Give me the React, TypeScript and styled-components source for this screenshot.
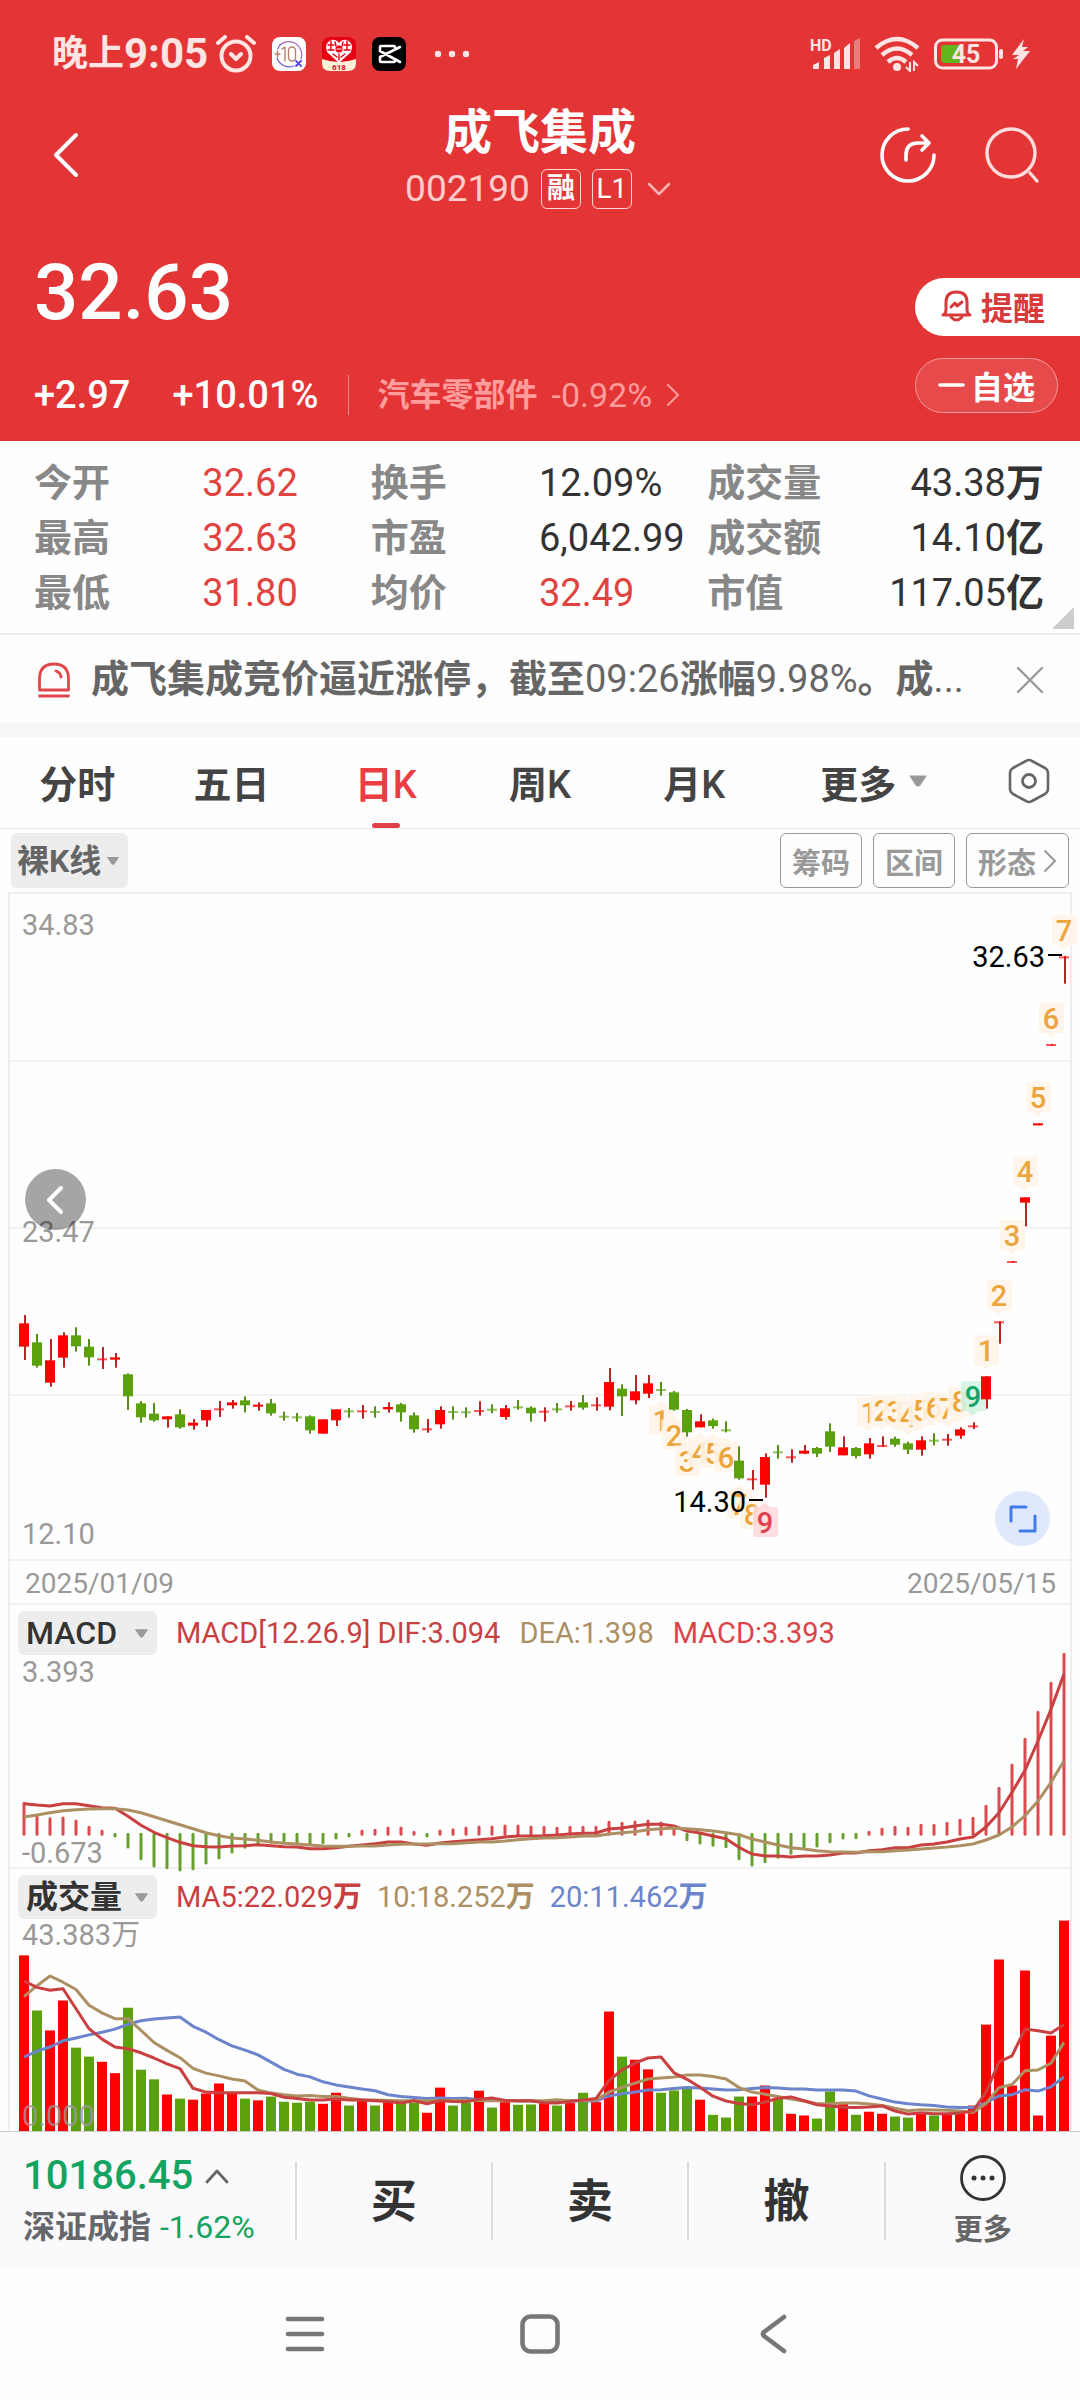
import React from 'react';
import styled, { createGlobalStyle } from 'styled-components';

const RED = '#e33536';
const UP = '#fe0000';
const DOWN = '#5ba10e';
const LINE_RED = '#c8403f';
const LINE_GOLD = '#ac9064';
const LINE_BLUE = '#6b84cb';

const GlobalStyle = createGlobalStyle`
  * { box-sizing: border-box; }
  body { margin: 0; background: #fdfdfd; }
  body, button, select {
    font-family: Roboto, "Noto Sans CJK SC", sans-serif;
    font-weight: 500;
  }
  button, select { border: 0; padding: 0; margin: 0; background: none; color: inherit; cursor: pointer; }
  h1, p, dl, dd, dt { margin: 0; font-weight: 500; }
  svg { display: block; flex: none; }
`;

const Page = styled.main`
  width: 100%;
  background: #fefefe;
  color: #333;
`;

/* ---------- header ---------- */
const Header = styled.header`
  background: ${RED};
  color: #fff;
`;
const StatusBar = styled.div`
  display: flex;
  align-items: center;
  justify-content: space-between;
  padding: 32px 50px 30px 52px;
  color: #ffe4e4;
`;
const StatusGroup = styled.div<{ $gap: number }>`
  display: flex;
  align-items: center;
  gap: ${(p) => p.$gap}px;
`;
const Clock = styled.div`
  display: flex;
  align-items: center;
  font-size: 36px;
  line-height: 44px;
  font-weight: 700;
  margin-right: -8px;
`;
const ClockDigits = styled.span`
  font-size: 42px;
`;
const NavBar = styled.div`
  display: grid;
  grid-template-columns: 1fr auto 1fr;
  align-items: center;
  padding: 0 40px;
`;
const IconButton = styled.button`
  display: flex;
  align-items: center;
  justify-content: center;
`;
const BackButton = styled(IconButton)`
  justify-self: start;
  padding: 0 0 6px 10px;
`;
const NavActions = styled.div`
  display: flex;
  justify-content: flex-end;
  gap: 47px;
  padding-bottom: 6px;
`;
const TitleBlock = styled.div`
  display: flex;
  flex-direction: column;
  align-items: center;
  gap: 9px;
`;
const Title = styled.h1`
  font-size: 48px;
  line-height: 54px;
  font-weight: 700;
`;
const CodeRow = styled.div`
  display: flex;
  align-items: center;
  gap: 11px;
  font-size: 37px;
  line-height: 40px;
  color: #ffcdcd;
  font-weight: 400;
`;
const Tag = styled.span`
  width: 40px;
  border: 1px solid #ffd5d5;
  border-radius: 6px;
  color: #fff;
  font-size: 28px;
  line-height: 38px;
  font-weight: 400;
  text-align: center;
`;
const Quote = styled.section`
  display: flex;
  justify-content: space-between;
  align-items: flex-end;
  padding: 44px 0 26px 34px;
`;
const Price = styled.p`
  font-size: 78px;
  line-height: 80px;
`;
const ChangeRow = styled.div`
  display: flex;
  align-items: center;
  margin-top: 42px;
  font-size: 38px;
  line-height: 40px;
`;
const Change = styled.span`
  margin-right: 42px;
`;
const Sector = styled.a`
  display: flex;
  align-items: center;
  gap: 14px;
  border-left: 1px solid #f08a8a;
  padding-left: 28px;
  margin-left: -12px;
  color: #ff9c9c;
  font-size: 32px;
  font-weight: 700;
  text-decoration: none;
`;
const SectorChange = styled.span`
  font-size: 34px;
  font-weight: 400;
`;
const QuoteActions = styled.div`
  display: flex;
  flex-direction: column;
  gap: 22px;
  width: 165px;
  padding-bottom: 2px;
`;
const RemindButton = styled.button`
  display: flex;
  align-items: center;
  gap: 9px;
  height: 58px;
  padding: 0 0 2px 26px;
  border-radius: 30px 0 0 30px;
  background: #fff;
  color: #d83a3b;
  font-size: 32px;
  font-weight: 700;
`;
const WatchButton = styled.button`
  display: flex;
  align-items: center;
  justify-content: center;
  gap: 6px;
  height: 55px;
  margin-right: 22px;
  padding-bottom: 2px;
  border: 1px solid #f39b9b;
  border-radius: 30px;
  background: #e64a4b;
  font-size: 32px;
  font-weight: 700;
`;

/* ---------- figures ---------- */
const Stats = styled.dl`
  position: relative;
  display: grid;
  grid-template-columns: repeat(3, 1fr);
  padding: 15px 36px 12px 34px;
  border-bottom: 2px solid #eee;
  font-size: 38px;
  line-height: 55px;
`;
const Stat = styled.div<{ $end?: boolean }>`
  display: grid;
  grid-template-columns: ${(p) => (p.$end ? 'auto 1fr' : '1fr 1fr')};
  text-align: ${(p) => (p.$end ? 'right' : 'left')};
  white-space: nowrap;
`;
const StatName = styled.dt`
  color: #888;
  font-weight: 700;
`;
const StatValue = styled.dd<{ $up?: boolean }>`
  color: ${(p) => (p.$up ? '#e04340' : '#333')};
  font-weight: 400;
`;
const Han = styled.span`
  font-weight: 700;
`;
const Corner = styled.span`
  position: absolute;
  right: 6px;
  bottom: 4px;
  border-left: 22px solid transparent;
  border-bottom: 22px solid #ccc;
`;
const Notice = styled.section`
  display: flex;
  align-items: center;
  padding: 17px 36px 16px 37px;
  color: #666;
  border-bottom: 14px solid #f7f7f7;
`;
const NoticeText = styled.p`
  flex: 1;
  min-width: 0;
  margin: 0 48px 0 20px;
  font-size: 38px;
  line-height: 55px;
  font-weight: 400;
  white-space: nowrap;
  overflow: hidden;
  text-overflow: ellipsis;
`;

/* ---------- tabs ---------- */
const Tabs = styled.nav`
  display: grid;
  grid-template-columns: repeat(5, 3fr) 4fr 2fr;
  border-bottom: 1px solid #e8e8e8;
`;
const Tab = styled.button<{ $active?: boolean }>`
  position: relative;
  display: flex;
  align-items: center;
  justify-content: center;
  height: 91px;
  padding-bottom: 3px;
  font-size: 38px;
  color: ${(p) => (p.$active ? '#ec3d45' : '#444')};
  &::after {
    content: '';
    display: ${(p) => (p.$active ? 'block' : 'none')};
    position: absolute;
    bottom: 0;
    width: 28px;
    height: 5px;
    border-radius: 3px;
    background: #e03f46;
  }
`;
const ToolRow = styled.div`
  display: flex;
  align-items: center;
  gap: 11px;
  padding: 4px 11px;
`;
const Picker = styled.label<{ $tall?: boolean }>`
  display: flex;
  align-items: center;
  justify-content: space-between;
  width: ${(p) => (p.$tall ? 117 : 139)}px;
  height: ${(p) => (p.$tall ? 55 : 44)}px;
  padding: 0 8px 0 ${(p) => (p.$tall ? 6 : 8)}px;
  border-radius: 6px;
  background: #ededed;
  color: ${(p) => (p.$tall ? '#666' : '#333')};
`;
const PickerSelect = styled.select<{ $bold?: boolean }>`
  appearance: none;
  font-size: 32px;
  line-height: 40px;
  font-weight: ${(p) => (p.$bold ? 700 : 500)};
  outline: 0;
`;
const ToolSpacer = styled.span`
  flex: 1;
`;
const ToolButton = styled.button`
  display: flex;
  align-items: center;
  gap: 7px;
  height: 55px;
  padding: 0 11px;
  border: 1px solid #999;
  border-radius: 6px;
  color: #999;
  font-size: 29px;
  font-weight: 700;
`;

/* ---------- charts ---------- */
const Frame = styled.section`
  margin: 0 8px;
  border: 2px solid #eee;
  border-width: 2px 2px 0;
`;
const Panel = styled.div`
  position: relative;
  border-bottom: 2px solid #f0f0f0;
`;
const LastPanel = styled.div``;
const Plot = styled.svg`
  width: 100%;
  height: auto;
  overflow: visible;
`;
const PrevButton = styled.button`
  position: absolute;
  left: 15px;
  top: 275px;
  display: flex;
  align-items: center;
  justify-content: center;
  width: 61px;
  height: 61px;
  padding-right: 4px;
  border-radius: 50%;
  background: rgba(0, 0, 0, 0.35);
`;
const ExpandButton = styled.button`
  position: absolute;
  right: 20px;
  bottom: 13px;
  display: flex;
  align-items: center;
  justify-content: center;
  width: 55px;
  height: 55px;
  border-radius: 50%;
  background: #dfe8fc;
`;
const Dates = styled.div`
  display: flex;
  justify-content: space-between;
  padding: 4px 14px 0 15px;
  border-bottom: 2px solid #f2f2f2;
  color: #999;
  font-size: 28px;
  line-height: 38px;
  font-weight: 400;
`;
const Legend = styled.div<{ $gap: number }>`
  display: flex;
  align-items: center;
  gap: ${(p) => p.$gap}px;
  padding: 6px 8px 0;
  font-size: 29px;
  line-height: 44px;
  white-space: nowrap;
`;
const LegendItem = styled.span<{ $color: string }>`
  color: ${(p) => p.$color};
  font-weight: 400;
`;
const LegendPicker = styled(Picker)`
  margin-right: 4px;
`;

/* ---------- bottom ---------- */
const TradeBar = styled.footer`
  display: grid;
  grid-template-columns: 3fr repeat(4, 2fr);
  align-items: center;
  padding: 24px 0;
  border-top: 1px solid #ccc;
  background: #fafafc;
`;
const IndexBlock = styled.button`
  display: flex;
  flex-direction: column;
  gap: 12px;
  padding-left: 23px;
  text-align: left;
`;
const IndexValue = styled.span`
  display: flex;
  align-items: center;
  gap: 12px;
  color: #12a460;
  font-size: 40px;
  line-height: 40px;
`;
const IndexName = styled.span`
  display: flex;
  align-items: center;
  gap: 9px;
  color: #66676c;
  font-size: 32px;
  line-height: 38px;
  font-weight: 700;
`;
const IndexChange = styled.span`
  color: #12a460;
  font-weight: 400;
`;
const TradeButton = styled.button<{ $small?: boolean }>`
  display: flex;
  flex-direction: column;
  align-items: center;
  justify-content: center;
  gap: 12px;
  height: 78px;
  border-left: 2px solid #dcdcdf;
  color: ${(p) => (p.$small ? '#666' : '#333')};
  font-size: ${(p) => (p.$small ? 29 : 46)}px;
  line-height: ${(p) => (p.$small ? 34 : 50)}px;
  font-weight: 700;
`;
const SystemNav = styled.nav`
  display: flex;
  justify-content: center;
  gap: 195px;
  padding: 44px 0 46px;
  background: #fdfdfd;
`;

/* ---------- data ---------- */
// One row per trading day: direction, high, body top, body bottom, low.
// Levels are in thirds of a pixel.
const CANDLES: [number, number, number, number, number][] = [
  [1,405,430,500,540],[0,462,487,557,563],[1,477,541,608,620],[1,457,466,533,563],[0,442,466,499,515],
  [0,477,500,532,557],[1,501,535,539,567],[1,519,532,539,563],[0,580,583,649,690],[0,663,670,712,728],
  [0,669,701,721,725],[1,709,709,718,743],[0,688,703,742,746],[1,717,728,737,749],[1,690,690,721,740],
  [1,663,685,689,711],[1,660,667,676,686],[0,649,661,676,697],[1,667,674,680,692],[0,657,670,700,707],
  [0,695,707,710,722],[0,699,709,712,725],[0,706,709,751,761],[1,718,718,761,761],[1,688,688,721,738],
  [0,684,691,695,713],[1,675,691,696,716],[0,679,693,697,713],[1,667,681,688,698],[0,669,673,697,725],
  [0,697,706,748,758],[1,717,745,749,758],[1,679,690,733,746],[0,679,693,697,719],[0,682,694,697,713],
  [1,664,690,694,707],[0,673,686,691,700],[1,675,685,711,719],[0,660,679,682,689],[0,679,683,700,725],
  [1,682,692,697,725],[0,669,685,689,698],[1,663,676,680,692],[0,645,667,683,689],[1,652,673,677,692],
  [1,564,606,680,691],[0,613,626,649,708],[1,585,634,661,673],[1,585,610,641,654],[0,606,627,632,647],
  [0,633,637,689,692],[0,687,690,757,770],[1,703,724,742,742],[0,716,721,738,746],[0,724,748,751,757],
  [0,799,842,895,899],[1,870,895,899,929],[1,820,831,914,953],[0,795,814,818,836],[1,808,829,833,848],
  [1,795,812,821,822],[0,801,804,821,831],[0,730,754,800,816],[1,769,802,826,826],[0,801,804,828,835],
  [1,774,790,823,836],[1,769,795,800,800],[0,770,776,794,800],[0,785,790,809,822],[1,769,781,809,827],
  [0,760,779,783,796],[1,762,776,781,797],[1,742,748,767,776],[1,727,736,740,747],[1,589,589,658,686],
  [1,424,424,428,491],[1,243,243,248,248],[1,52,52,68,139],[1,-170,-170,-164,-164],[1,-408,-408,-403,-403],
  [1,-672,-671,-666,-589],
];
const VOLUME = [
  277,437,495,408,545,571,586,619,429,609,637,681,693,696,678,649,678,693,698,687,702,705,702,708,676,713,700,
  713,703,707,705,734,661,713,705,670,719,703,711,710,703,713,706,676,703,440,571,580,608,676,669,664,696,740,
  748,687,687,655,693,737,742,751,672,709,740,731,737,745,748,737,742,737,737,713,478,289,655,321,742,510,176,
];
const MA5 = [
  352,370,378,374,432,490,520,543,548,560,575,592,606,663,674,676,676,676,676,678,689,693,697,697,694,697,697,
  699,701,706,699,708,699,701,702,695,691,698,699,699,705,706,701,697,693,641,610,590,575,572,618,637,660,686,
  700,707,711,703,692,688,699,711,714,718,719,717,714,729,738,735,737,737,735,729,675,586,569,491,496,502,478,
];
const MA10 = [
  397,365,337,355,376,422,444,461,461,495,530,553,574,605,619,627,636,642,668,677,682,685,684,687,687,692,696,
  697,698,699,699,699,698,698,698,698,699,699,699,699,699,696,699,698,697,674,660,648,636,633,630,624,624,629,
  636,661,674,680,687,694,700,708,708,706,706,709,713,721,728,725,726,727,729,733,707,661,652,612,610,590,530,
];
const MA20 = [
  572,555,543,525,517,508,500,491,477,467,462,459,456,483,500,522,540,552,566,587,608,622,630,644,653,659,665,
  670,682,687,690,693,691,693,692,696,696,698,700,700,703,702,699,699,700,685,679,674,668,667,664,661,662,665,
  668,667,664,661,662,665,665,668,668,668,671,685,694,703,708,711,713,717,719,719,705,685,682,667,671,659,630,
];
const MACD = [
  640,678,686,684,693,712,723,738,771,806,828,833,840,836,819,803,786,772,763,757,757,760,760,758,744,738,723,
  721,714,714,727,738,723,719,714,711,711,708,708,711,712,715,712,712,712,697,700,696,693,699,718,749,759,766,
  770,806,825,815,802,790,772,768,755,744,743,727,717,712,715,706,706,700,691,685,649,595,525,448,367,280,193,
];
const DIF = [
  641,645,648,641,641,647,653,655,679,706,727,743,757,767,770,771,768,767,764,767,770,771,776,776,773,769,765,
  761,756,756,762,766,759,755,752,749,746,741,738,738,737,735,732,730,729,717,714,708,703,703,708,723,729,738,
  746,772,792,798,798,801,798,798,795,789,789,782,779,773,773,765,762,756,747,741,711,668,607,541,453,358,252,
];
const DEA = [
  681,675,668,662,659,657,656,656,660,668,680,692,704,716,728,737,744,747,751,756,760,762,765,768,769,769,768,
  768,765,763,762,762,761,761,758,756,756,753,749,746,744,743,741,738,738,732,728,725,719,716,714,716,719,723,
  728,734,747,756,765,773,777,782,785,786,787,785,785,782,780,777,774,771,767,762,750,735,711,677,633,577,512,
];
// Sequence counters: start day, labels, side of the candle.
const COUNTS: { start: number; labels: string[]; below?: boolean }[] = [
  { start: 49, labels: ['1', '2', '3', '4', '5', '6'], below: true },
  { start: 55, labels: ['7', '8', '9'], below: true },
  { start: 65, labels: ['1', '2', '3', '4', '5', '6', '7', '8', '9'] },
  { start: 74, labels: ['1', '2', '3', '4', '5', '6', '7'] },
];

const dayX = (i: number) => 24 + i * 13;
const macdY = (v: number) => -65 + v / 3;
const volumeY = (v: number) => 212 - (787 - v) / 2.904;
const points = (values: number[], toY: (v: number) => number) =>
  values.map((v, i) => `${dayX(i)},${toY(v).toFixed(1)}`).join(' ');

const AXIS = { fontSize: 29, fill: '#999', fontWeight: 400 };

// Figures stay regular while Chinese characters are set bold.
function Mixed({ text }: { text: string }) {
  return (
    <span>
      {text.split(/([\u4e00-\u9fff，。]+)/).filter(Boolean).map((part, i) => (
        /[\u4e00-\u9fff，。]/.test(part) ? <Han key={i}>{part}</Han> : part
      ))}
    </span>
  );
}

function CountBadge({ day, label, below }: { day: number; label: string; below?: boolean }) {
  const x = dayX(day);
  const [, high, , , low] = CANDLES[day];
  const y = 286 + (below ? (low + 28) / 3 : (high - 123) / 3);
  const nine = label === '9';
  const bg = nine ? (below ? '#ffd6da' : '#cdf1df') : '#fff3e6';
  const fg = nine ? (below ? '#e04350' : '#14a566') : '#eca53c';
  const tip = below ? `M${x - 5} ${y}L${x} ${y - 4}L${x + 5} ${y}Z` : `M${x - 5} ${y + 30}L${x} ${y + 34}L${x + 5} ${y + 30}Z`;
  return (
    <g>
      <rect x={x - 13} y={y - 1} width={27} height={32} rx={2} fill="#fff" opacity={0.5} />
      <rect x={x - 12} y={y} width={25} height={30} rx={2} fill={bg} opacity={0.8} />
      <path d={tip} fill={bg} />
      <text x={x} y={y + 26} textAnchor="middle" fontSize={29} fontWeight={500} fill={fg}>{label}</text>
    </g>
  );
}

function CandleChart() {
  return (
    <Plot viewBox="10 0 1060 665" role="img" aria-label="日K">
      {[167, 334, 501].map((y) => (
        <path key={y} d={`M10 ${y}H1070`} stroke="#f2f2f2" strokeWidth={2} />
      ))}
      <text x={22} y={41} {...AXIS}>34.83</text>
      <text x={22} y={348} {...AXIS}>23.47</text>
      <text x={22} y={650} {...AXIS}>12.10</text>
      {COUNTS.map((c) => c.labels.map((l, k) => (
        <CountBadge key={c.start + k} day={c.start + k} label={l} below={c.below} />
      )))}
      {CANDLES.map(([up, h, t, b, l], i) => {
        const flat = b - t < 6;
        const ink = up ? '#b92323' : '#568f1c';
        return (
          <g key={i}>
            <rect x={dayX(i) - (up ? 0 : 1)} y={286 + h / 3} width={2} height={(l - h) / 3} fill={ink} />
            <rect
              x={dayX(i) - 5} y={286 + t / 3} width={10} height={Math.max((b - t) / 3, 2)}
              fill={up ? UP : DOWN} opacity={flat ? 0.65 : 1}
            />
          </g>
        );
      })}
      <text x={1045} y={73} textAnchor="end" fontSize={29} fontWeight={400} fill="#000">32.63</text>
      <path d="M1048 61H1062" stroke="#000" strokeWidth={2} />
      <text x={746} y={618} textAnchor="end" fontSize={29} fontWeight={400} fill="#000">14.30</text>
      <path d="M749 606H763" stroke="#000" strokeWidth={2} />
    </Plot>
  );
}

function MacdChart() {
  return (
    <Plot viewBox="10 0 1060 212" role="img" aria-label="MACD">
      <text x={22} y={27} {...AXIS}>3.393</text>
      <text x={22} y={208} {...AXIS}>-0.673</text>
      {MACD.map((v, i) => (
        <path
          key={i} d={`M${dayX(i)} ${macdY(733)}V${macdY(v).toFixed(1)}`} strokeWidth={3} strokeLinecap="round"
          stroke={v < 733 ? '#da4a4f' : '#67a02e'}
        />
      ))}
      <polyline points={points(DIF, macdY)} fill="none" stroke={LINE_RED} strokeWidth={3} strokeLinejoin="round" />
      <polyline points={points(DEA, macdY)} fill="none" stroke={LINE_GOLD} strokeWidth={3} strokeLinejoin="round" />
    </Plot>
  );
}

function VolumeChart() {
  return (
    <Plot viewBox="10 0 1060 212" role="img" aria-label="成交量">
      {VOLUME.map((v, i) => (
        <rect key={i} x={dayX(i) - 5} y={volumeY(v)} width={10} height={212 - volumeY(v)} fill={CANDLES[i][0] ? UP : DOWN} />
      ))}
      <text x={22} y={26} {...AXIS}>43.383万</text>
      <text x={22} y={207} {...AXIS} opacity={0.8}>0.000</text>
      <polyline points={points(MA20, volumeY)} fill="none" stroke={LINE_BLUE} strokeWidth={3} strokeLinejoin="round" />
      <polyline points={points(MA10, volumeY)} fill="none" stroke={LINE_GOLD} strokeWidth={3} strokeLinejoin="round" />
      <polyline points={points(MA5, volumeY)} fill="none" stroke={LINE_RED} strokeWidth={3} strokeLinejoin="round" />
    </Plot>
  );
}

/* ---------- icons ---------- */
const stroke = (color: string, width: number) => ({
  fill: 'none', stroke: color, strokeWidth: width, strokeLinecap: 'round' as const, strokeLinejoin: 'round' as const,
});
const TriangleSvg = styled.svg<{ $space?: boolean }>`
  margin-left: ${(p) => (p.$space ? 12 : 0)}px;
`;
const Triangle = ({ w, space }: { w: number; space?: boolean }) => (
  <TriangleSvg $space={space} width={w} height={w} viewBox="0 0 18 18" aria-hidden="true">
    <path d="M1 4H17L11 13Q9 15 7 13Z" fill="#999" />
  </TriangleSvg>
);
const Bolt = styled.svg`
  margin-left: -6px;
`;

function StatusIcons() {
  return (
    <StatusGroup $gap={16}>
      <Clock><span>晚上</span><ClockDigits>9:05</ClockDigits></Clock>
      <svg width="40" height="38" viewBox="0 0 40 38" aria-hidden="true">
        <g {...stroke('#ffe4e4', 4)}>
          <circle cx="20" cy="21" r="14.5" />
          <path d="M2 8L9 2M38 8L31 2M15 19L20 24L25 19" />
        </g>
      </svg>
      <svg width="34" height="34" viewBox="0 0 34 34" aria-hidden="true">
        <rect width="34" height="34" rx="8" fill="#fff" />
        <path d="M8 8A13 13 0 0 1 29 22" {...stroke('#a06ac0', 1.2)} />
        <path d="M5 21A13 13 0 0 0 22 29M8 8A13 13 0 0 0 6 12" {...stroke('#7d5cc8', 1.2)} />
        <path d="M3 17H8M5.5 14V20M10 12L13 10V24" {...stroke('#b8806a', 1.4)} />
        <rect x="16.500" y="10" width="7" height="14" rx="3.500" {...stroke('#b8806a', 1.4)} />
        <path d="M24 24L29 29M29 24L24 29" {...stroke('#5146e8', 1.8)} />
      </svg>
      <svg width="34" height="34" viewBox="0 0 34 34" aria-hidden="true">
        <rect width="34" height="34" rx="8" fill="#e60012" />
        <path d="M0 22Q17 28 34 22V26Q34 34 26 34H8Q0 34 0 26Z" fill="#fff0d8" />
        <path d="M17 26L5 15Q2 6 9 3Q14 2 17 6Q20 2 25 3Q32 6 29 15Z" fill="#fff" />
        <path d="M6 8H12M22 8H28M6 13H12M22 13H28M17 17V23M11 17L15 20M23 17L19 20M9 4V12M25 4V12M13 5L14 9M21 5L20 9" {...stroke('#e60012', 1.4)} />
        <circle cx="17" cy="12" r="3.500" fill="#e60012" />
        <path d="M15 12H19" {...stroke('#fff', 1.2)} />
        <text x="17" y="33" fontSize="8" fontWeight="700" textAnchor="middle" fill="#d0101c">618</text>
      </svg>
      <svg width="34" height="34" viewBox="0 0 34 34" aria-hidden="true">
        <rect width="34" height="34" rx="8" fill="#000" />
        <path d="M28 10L8 20V24Q8 25 9 25H22Q23 25 23 23M28 25L8 14V10Q8 9 9 9H22Q23 9 23 11" {...stroke('#fff', 2.6)} />
      </svg>
      <svg width="60" height="8" viewBox="0 0 60 8" aria-hidden="true">
        <g fill="#ffe4e4"><circle cx="16" cy="4" r="3.200" /><circle cx="30" cy="4" r="3.200" /><circle cx="44" cy="4" r="3.200" /></g>
      </svg>
    </StatusGroup>
  );
}

function SignalIcons() {
  return (
    <StatusGroup $gap={14}>
      <svg width="50" height="38" viewBox="0 0 50 38" aria-hidden="true">
        <text x="0" y="16" fontSize="16" fontWeight="700" fill="#ffe4e4">HD</text>
        <g fill="#ffe4e4">
          <path d="M3 34V30L9 27V34ZM14 34V23L20 20V34ZM24 34V18L30 14V34ZM34 34V13L40 8V34Z" />
          <path d="M44 34V6L50 3V34Z" opacity="0.4" />
        </g>
      </svg>
      <svg width="46" height="36" viewBox="0 0 46 36" aria-hidden="true">
        <g fill="none" stroke="#ffe4e4" strokeWidth="4.500">
          <path d="M2 12Q23 -6 44 12" /><path d="M8 19Q23 6 38 19" /><path d="M14 26Q23 18 32 26" />
        </g>
        <circle cx="23" cy="31" r="4" fill="#ffe4e4" />
        <path d="M36 26V35L32 31M40 35V26L44 30" fill="none" stroke="#ffe4e4" strokeWidth="2" />
      </svg>
      <svg width="70" height="32" viewBox="0 0 70 32" aria-hidden="true">
        <rect x="1.500" y="2" width="61" height="28" rx="7" fill="none" stroke="#ffe4e4" strokeWidth="3" />
        <path d="M7 11Q7 7 11 7H28V25H11Q7 25 7 21Z" fill="#62b51c" />
        <rect x="65" y="11" width="4" height="10" rx="2" fill="#ffe4e4" />
        <text x="32" y="25" fontSize="25" fontWeight="700" textAnchor="middle" fill="#ffe4e4">45</text>
      </svg>
      <Bolt width="18" height="32" viewBox="0 0 18 32" aria-hidden="true">
        <path d="M12 1L0 17H7L1 21H6L4 31L18 13H11L16 9H10Z" fill="#ffe4e4" />
      </Bolt>
    </StatusGroup>
  );
}

const STATS: [string, string, boolean][] = [
  ['今开', '32.62', true], ['换手', '12.09%', false], ['成交量', '43.38万', false],
  ['最高', '32.63', true], ['市盈', '6,042.99', false], ['成交额', '14.10亿', false],
  ['最低', '31.80', true], ['均价', '32.49', true], ['市值', '117.05亿', false],
];
const PERIODS = ['分时', '五日', '日K', '周K', '月K'];

export default function App() {
  return (
    <Page>
      <GlobalStyle />
      <Header>
        <StatusBar><StatusIcons /><SignalIcons /></StatusBar>
        <NavBar>
          <BackButton aria-label="返回">
            <svg width="32" height="46" viewBox="0 0 32 46"><path d="M26 3L6 23L26 43" {...stroke('#fff', 4)} /></svg>
          </BackButton>
          <TitleBlock>
            <Title>成飞集成</Title>
            <CodeRow>
              <span>002190</span><Tag><Mixed text="融" /></Tag><Tag>L1</Tag>
              <svg width="32" height="16" viewBox="0 0 32 16" aria-hidden="true"><path d="M6 3L16 13L26 3" {...stroke('#ffb4b4', 2.5)} /></svg>
            </CodeRow>
          </TitleBlock>
          <NavActions>
            <IconButton aria-label="分享">
              <svg width="58" height="60" viewBox="0 0 58 60">
                <g {...stroke('#fff', 3.6)}>
                  <path d="M29 4A26 26 0 1 0 55 30" />
                  <path d="M27 35V30Q27 18 39 18H49M43 11L50 18L43 25" />
                </g>
              </svg>
            </IconButton>
            <IconButton aria-label="搜索">
              <svg width="56" height="60" viewBox="0 0 56 60">
                <circle cx="27" cy="28" r="24" {...stroke('#ffdcdc', 3.4)} />
                <path d="M46 48L53 56" {...stroke('#ffdcdc', 3.4)} />
              </svg>
            </IconButton>
          </NavActions>
        </NavBar>
        <Quote>
          <div>
            <Price>32.63</Price>
            <ChangeRow>
              <Change>+2.97</Change><Change>+10.01%</Change>
              <Sector href="#sector">
                汽车零部件<SectorChange>-0.92%</SectorChange>
                <svg width="14" height="24" viewBox="0 0 14 24" aria-hidden="true"><path d="M2 2L12 12L2 22" {...stroke('#ff9c9c', 2)} /></svg>
              </Sector>
            </ChangeRow>
          </div>
          <QuoteActions>
            <RemindButton>
              <svg width="31" height="34" viewBox="0 0 31 34" aria-hidden="true">
                <g {...stroke('#d83a3b', 3)}>
                  <path d="M2 26Q5 25 5 20V13Q5 3 15.500 3Q26 3 26 13V20Q26 25 29 26Z" />
                  <path d="M10 28Q15.500 34 21 28M10 18L14 14L16 17L21 13" />
                </g>
              </svg>
              提醒
            </RemindButton>
            <WatchButton>
              <svg width="27" height="6" viewBox="0 0 27 6" aria-hidden="true"><path d="M2 3H25" {...stroke('#fff', 3.6)} /></svg>
              自选
            </WatchButton>
          </QuoteActions>
        </Quote>
      </Header>

      <Stats>
        {STATS.map(([name, value, up], i) => (
          <Stat key={name} $end={i % 3 === 2}>
            <StatName>{name}</StatName>
            <StatValue $up={up}><Mixed text={value} /></StatValue>
          </Stat>
        ))}
        <Corner />
      </Stats>

      <Notice>
        <svg width="34" height="36" viewBox="0 0 34 36" aria-hidden="true">
          <g {...stroke('#df474b', 2.8)}>
            <path d="M2.500 28V16Q3 2 17 2Q31 2 31.500 16V28Z" /><path d="M2.500 34H31.500M19 9Q24 11 24 15" />
          </g>
        </svg>
        <NoticeText><Mixed text="成飞集成竞价逼近涨停，截至09:26涨幅9.98%。成" />...</NoticeText>
        <IconButton aria-label="关闭">
          <svg width="28" height="28" viewBox="0 0 28 28"><path d="M2 2L26 26M26 2L2 26" {...stroke('#999', 2.4)} /></svg>
        </IconButton>
      </Notice>

      <Tabs>
        {PERIODS.map((p) => <Tab key={p} $active={p === '日K'}><Mixed text={p} /></Tab>)}
        <Tab><Mixed text="更多" /><Triangle w={20} space /></Tab>
        <Tab aria-label="设置">
          <svg width="42" height="46" viewBox="0 0 42 46">
            <path d="M18 3Q21 1 24 3L37 10Q40 12 40 15V31Q40 34 37 36L24 43Q21 45 18 43L5 36Q2 34 2 31V15Q2 12 5 10Z" {...stroke('#666', 2.6)} />
            <circle cx="21" cy="23" r="6.500" {...stroke('#666', 2.8)} />
          </svg>
        </Tab>
      </Tabs>

      <ToolRow>
        <Picker $tall>
          <PickerSelect $bold aria-label="K线样式"><option>裸K线</option></PickerSelect>
          <Triangle w={14} />
        </Picker>
        <ToolSpacer />
        <ToolButton>筹码</ToolButton>
        <ToolButton>区间</ToolButton>
        <ToolButton>
          形态
          <svg width="14" height="24" viewBox="0 0 14 24" aria-hidden="true"><path d="M2 2L12 12L2 22" {...stroke('#999', 2)} /></svg>
        </ToolButton>
      </ToolRow>

      <Frame>
        <Panel>
          <CandleChart />
          <PrevButton aria-label="向前">
            <svg width="22" height="32" viewBox="0 0 22 32"><path d="M18 4L6 16L18 28" {...stroke('#fff', 4)} /></svg>
          </PrevButton>
          <ExpandButton aria-label="全屏">
            <svg width="28" height="28" viewBox="0 0 28 28"><path d="M2 16V2H17M26 11V26H11" {...stroke('#3f7ce8', 3)} /></svg>
          </ExpandButton>
        </Panel>
        <Dates><span>2025/01/09</span><span>2025/05/15</span></Dates>
        <Panel>
          <Legend $gap={19}>
            <Picker>
              <PickerSelect aria-label="指标"><option>MACD</option></PickerSelect><Triangle w={15} />
            </Picker>
            <LegendItem $color={LINE_RED}>MACD[12.26.9] DIF:3.094</LegendItem>
            <LegendItem $color={LINE_GOLD}>DEA:1.398</LegendItem>
            <LegendItem $color="#dc4349">MACD:3.393</LegendItem>
          </Legend>
          <MacdChart />
        </Panel>
        <LastPanel>
          <Legend $gap={15}>
            <LegendPicker>
              <PickerSelect $bold aria-label="副图指标"><option>成交量</option></PickerSelect><Triangle w={15} />
            </LegendPicker>
            <LegendItem $color={LINE_RED}><Mixed text="MA5:22.029万" /></LegendItem>
            <LegendItem $color={LINE_GOLD}><Mixed text="10:18.252万" /></LegendItem>
            <LegendItem $color={LINE_BLUE}><Mixed text="20:11.462万" /></LegendItem>
          </Legend>
          <VolumeChart />
        </LastPanel>
      </Frame>

      <TradeBar>
        <IndexBlock>
          <IndexValue>
            10186.45
            <svg width="24" height="16" viewBox="0 0 24 16" aria-hidden="true"><path d="M2 14L12 3L22 14" {...stroke('#666', 2.8)} /></svg>
          </IndexValue>
          <IndexName>深证成指<IndexChange>-1.62%</IndexChange></IndexName>
        </IndexBlock>
        <TradeButton>买</TradeButton>
        <TradeButton>卖</TradeButton>
        <TradeButton>撤</TradeButton>
        <TradeButton $small>
          <svg width="46" height="46" viewBox="0 0 46 46" aria-hidden="true">
            <circle cx="23" cy="23" r="21.500" {...stroke('#333', 2.8)} />
            <g fill="#333"><circle cx="14" cy="23" r="2.500" /><circle cx="23" cy="23" r="2.500" /><circle cx="32" cy="23" r="2.500" /></g>
          </svg>
          更多
        </TradeButton>
      </TradeBar>

      <SystemNav aria-label="系统导航">
        <IconButton aria-label="菜单">
          <svg width="40" height="40" viewBox="0 0 40 40"><path d="M3 5H37M3 20H37M3 35H37" {...stroke('#777', 4.6)} /></svg>
        </IconButton>
        <IconButton aria-label="主页">
          <svg width="40" height="40" viewBox="0 0 40 40"><rect x="2.500" y="2.500" width="35" height="35" rx="8" {...stroke('#777', 4.6)} /></svg>
        </IconButton>
        <IconButton aria-label="后退">
          <svg width="40" height="40" viewBox="0 0 40 40"><path d="M29 3L9 18Q7 20 9 22L29 37" {...stroke('#777', 4.6)} /></svg>
        </IconButton>
      </SystemNav>
    </Page>
  );
}
